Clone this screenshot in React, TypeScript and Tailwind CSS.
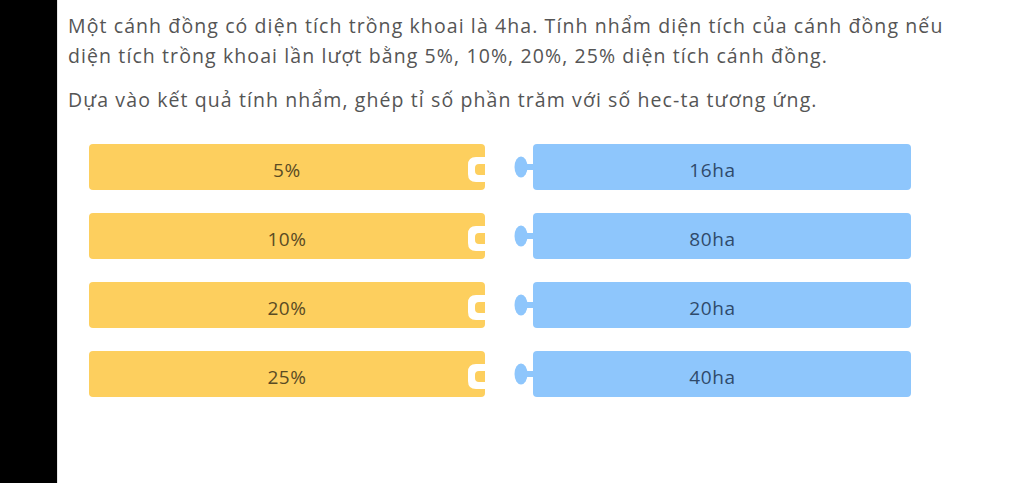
import React from "react";

const rows = [
  { left: "5%", right: "16ha" },
  { left: "10%", right: "80ha" },
  { left: "20%", right: "20ha" },
  { left: "25%", right: "40ha" },
];

function YellowBlock({ label }: { label: string }) {
  return (
    <div className="relative w-[396px] h-[46px] rounded-[4px] bg-[#fdcf5e] flex items-center justify-center">
      <span className="text-[19px] tracking-[0.6px] text-[#5a4b24] mt-[6px]">{label}</span>
      <svg className="absolute right-0 top-[13px]" width="17" height="25" viewBox="0 0 17 25">
        <path
          fill="#ffffff"
          fillRule="evenodd"
          d="M17 0 L8 0 Q0 0 0 8 L0 17 Q0 25 8 25 L17 25 Z M17 7 L11 7 Q7 7 7 11 L7 14 Q7 18 11 18 L17 18 Z"
        />
      </svg>
    </div>
  );
}

function BlueBlock({ label }: { label: string }) {
  return (
    <div className="flex items-center h-[46px]">
      <svg width="19" height="24" viewBox="0 0 19 24" className="shrink-0 -mt-[1px]">
        <ellipse cx="7" cy="12" rx="6.5" ry="10.5" fill="#8ec6fc" />
        <rect x="11" y="9" width="8.5" height="6" fill="#8ec6fc" />
      </svg>
      <div className="w-[378px] h-[46px] rounded-[4px] bg-[#8ec6fc] flex items-center justify-center">
        <span className="text-[19px] tracking-[0.6px] text-[#2f4a6b] -ml-[19px] mt-[6px]">{label}</span>
      </div>
    </div>
  );
}

export default function App() {
  return (
    <div
      className="w-[1024px] h-[483px] flex bg-black overflow-hidden"
      style={{ fontFamily: '"Open Sans", "Noto Sans", sans-serif' }}
    >
      <div className="w-[57px] shrink-0 bg-black" />
      <div className="flex-1 bg-white border-l border-[#e6e6e6] pl-[10px] pt-[11px]">
        <p className="text-[19.5px] leading-[30px] text-[#555555] tracking-[1.1px] whitespace-nowrap">
          Một cánh đồng có diện tích trồng khoai là 4ha. Tính nhẩm diện tích của cánh đồng nếu
          <br />
          diện tích trồng khoai lần lượt bằng 5%, 10%, 20%, 25% diện tích cánh đồng.
        </p>
        <p className="mt-[14px] text-[19.5px] leading-[30px] text-[#555555] tracking-[1.1px] whitespace-nowrap">
          Dựa vào kết quả tính nhẩm, ghép tỉ số phần trăm với số hec-ta tương ứng.
        </p>
        <div className="mt-[29px] ml-[21px] flex flex-col gap-[23px]">
          {rows.map((r) => (
            <div key={r.left} className="flex items-center gap-[29px]">
              <YellowBlock label={r.left} />
              <BlueBlock label={r.right} />
            </div>
          ))}
        </div>
      </div>
    </div>
  );
}
